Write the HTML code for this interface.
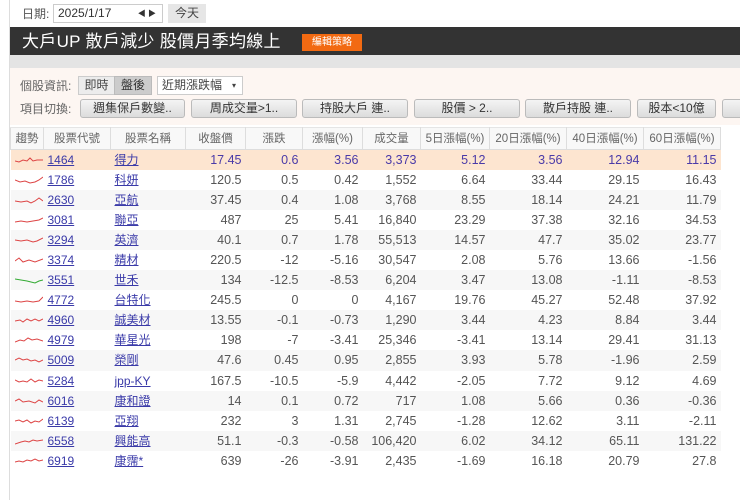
<!DOCTYPE html>
<html><head><meta charset="utf-8"><style>
*{margin:0;padding:0;box-sizing:border-box}
body{width:740px;height:500px;background:#fff;font-family:"Liberation Sans","Noto Sans CJK TC",sans-serif;font-size:12px;color:#555;position:relative;overflow:hidden;line-height:14px}
.a{position:absolute}
.lb{position:absolute;left:9px;top:0;width:1px;height:500px;background:#ddd}
.btn{position:absolute;top:99px;height:19px;background:linear-gradient(#f4f4f4,#dcdcdc);border:1px solid #bbb;border-radius:3px;text-align:center;font-size:12px;line-height:17px;color:#333}
table{position:absolute;left:10px;top:127px;border-collapse:collapse;table-layout:fixed;width:710px}
th{height:22px;font-weight:normal;font-size:11.5px;line-height:14px;color:#666;background:#f8f8f8;border:1px solid #ddd;border-top:1px solid #e5e5e5}
td{height:20.1px;text-align:right;padding-right:4px;font-size:12.5px;line-height:14px;color:#555;white-space:nowrap;vertical-align:middle}
td.l{text-align:left;padding-left:4px}
td a{color:#3a3aa8;text-decoration:underline;font-size:12px;line-height:14px}
tr:nth-child(even) td{background:#f7f7f7}
tr.h td{background:#fde5d0!important;color:#4a3aa8}
svg{display:block}
</style></head><body>
<div class="lb"></div>
<div class="a" style="left:22px;top:7px;color:#555">日期:</div>
<div class="a" style="left:53px;top:4px;width:110px;height:19px;border:1px solid #ccc;background:#fff;font-size:12px;line-height:17px;padding-left:4px;color:#333">2025/1/17<span style="position:absolute;right:6px;font-size:8px">◀ ▶</span></div>
<div class="a" style="left:168px;top:4px;width:38px;height:19px;background:#e6e6e6;text-align:center;line-height:19px;color:#444">今天</div>
<div class="a" style="left:10px;top:27px;width:730px;height:28px;background:#333"></div>
<div class="a" style="left:22px;top:31px;color:#fff;font-size:17px;line-height:22px;letter-spacing:0.3px">大戶UP 散戶減少 股價月季均線上</div>
<div class="a" style="left:302px;top:34px;width:60px;height:17px;background:#f26a12;color:#fff;font-size:10px;text-align:center;line-height:17px">編輯策略</div>
<div class="a" style="left:10px;top:55px;width:730px;height:13px;background:#e4e4e4"></div>
<div class="a" style="left:10px;top:68px;width:730px;height:57px;background:#fdf6f2"></div>
<div class="a" style="left:20px;top:79px;color:#666">個股資訊:</div>
<div class="a" style="left:78px;top:76px;width:37px;height:19px;background:#ececec;border:1px solid #ccc;text-align:center;line-height:17px;color:#444">即時</div>
<div class="a" style="left:114px;top:76px;width:38px;height:19px;background:#ccc;border:1px solid #bbb;text-align:center;line-height:17px;color:#333">盤後</div>
<div class="a" style="left:157px;top:76px;width:86px;height:19px;background:#fff;border:1px solid #ccc;line-height:17px;padding-left:4px;color:#444">近期漲跌幅<span style="position:absolute;right:6px;font-size:8px">▾</span></div>
<div class="a" style="left:20px;top:102px;color:#666">項目切換:</div>
<div class="btn" style="left:80px;width:105px">週集保戶數變..</div>
<div class="btn" style="left:191px;width:106px">周成交量&gt;1..</div>
<div class="btn" style="left:302px;width:106px">持股大戶 連..</div>
<div class="btn" style="left:414px;width:106px">股價 &gt; 2..</div>
<div class="btn" style="left:525px;width:106px">散戶持股 連..</div>
<div class="btn" style="left:637px;width:79px">股本&lt;10億</div>
<div class="btn" style="left:722px;width:30px"></div>
<table>
<colgroup><col style="width:33px"><col style="width:67px"><col style="width:75px"><col style="width:60px"><col style="width:57px"><col style="width:60px"><col style="width:58px"><col style="width:69px"><col style="width:77px"><col style="width:77px"><col style="width:77px"></colgroup>
<tr><th>趨勢</th><th>股票代號</th><th>股票名稱</th><th>收盤價</th><th>漲跌</th><th>漲幅(%)</th><th>成交量</th><th>5日漲幅(%)</th><th>20日漲幅(%)</th><th>40日漲幅(%)</th><th>60日漲幅(%)</th></tr>
<tr class="h"><td class="l"><svg width="28" height="10"><polyline fill="none" stroke="#d44" stroke-width="1" points="0,6 4,7 8,5 12,6 15,3 18,6 22,5 28,5"/></svg></td><td class="l"><a>1464</a></td><td class="l"><a>得力</a></td><td>17.45</td><td>0.6</td><td>3.56</td><td>3,373</td><td>5.12</td><td>3.56</td><td>12.94</td><td>11.15</td></tr>
<tr><td class="l"><svg width="28" height="10"><polyline fill="none" stroke="#d44" points="0,5 5,7 10,6 15,8 20,7 24,5 28,2"/></svg></td><td class="l"><a>1786</a></td><td class="l"><a>科妍</a></td><td>120.5</td><td>0.5</td><td>0.42</td><td>1,552</td><td>6.64</td><td>33.44</td><td>29.15</td><td>16.43</td></tr>
<tr><td class="l"><svg width="28" height="10"><polyline fill="none" stroke="#d44" points="0,6 6,7 12,6 16,8 20,6 24,3 28,6"/></svg></td><td class="l"><a>2630</a></td><td class="l"><a>亞航</a></td><td>37.45</td><td>0.4</td><td>1.08</td><td>3,768</td><td>8.55</td><td>18.14</td><td>24.21</td><td>11.79</td></tr>
<tr><td class="l"><svg width="28" height="10"><polyline fill="none" stroke="#d44" points="0,7 6,6 12,7 18,6 24,5 28,3"/></svg></td><td class="l"><a>3081</a></td><td class="l"><a>聯亞</a></td><td>487</td><td>25</td><td>5.41</td><td>16,840</td><td>23.29</td><td>37.38</td><td>32.16</td><td>34.53</td></tr>
<tr><td class="l"><svg width="28" height="10"><polyline fill="none" stroke="#d44" points="0,5 6,6 12,5 18,7 22,6 28,3"/></svg></td><td class="l"><a>3294</a></td><td class="l"><a>英濟</a></td><td>40.1</td><td>0.7</td><td>1.78</td><td>55,513</td><td>14.57</td><td>47.7</td><td>35.02</td><td>23.77</td></tr>
<tr><td class="l"><svg width="28" height="10"><polyline fill="none" stroke="#d44" points="0,6 4,3 8,7 14,5 20,7 28,4"/></svg></td><td class="l"><a>3374</a></td><td class="l"><a>精材</a></td><td>220.5</td><td>-12</td><td>-5.16</td><td>30,547</td><td>2.08</td><td>5.76</td><td>13.66</td><td>-1.56</td></tr>
<tr><td class="l"><svg width="28" height="10"><polyline fill="none" stroke="#3a3" points="0,4 6,5 12,6 16,7 20,8 24,6 28,5"/></svg></td><td class="l"><a>3551</a></td><td class="l"><a>世禾</a></td><td>134</td><td>-12.5</td><td>-8.53</td><td>6,204</td><td>3.47</td><td>13.08</td><td>-1.11</td><td>-8.53</td></tr>
<tr><td class="l"><svg width="28" height="10"><polyline fill="none" stroke="#d44" points="0,6 6,7 12,6 18,7 24,6 28,2"/></svg></td><td class="l"><a>4772</a></td><td class="l"><a>台特化</a></td><td>245.5</td><td>0</td><td>0</td><td>4,167</td><td>19.76</td><td>45.27</td><td>52.48</td><td>37.92</td></tr>
<tr><td class="l"><svg width="28" height="10"><polyline fill="none" stroke="#d44" points="0,6 5,5 8,7 12,4 16,6 20,4 24,6 28,4"/></svg></td><td class="l"><a>4960</a></td><td class="l"><a>誠美材</a></td><td>13.55</td><td>-0.1</td><td>-0.73</td><td>1,290</td><td>3.44</td><td>4.23</td><td>8.84</td><td>3.44</td></tr>
<tr><td class="l"><svg width="28" height="10"><polyline fill="none" stroke="#d44" points="0,7 5,5 9,6 13,3 17,5 22,4 28,6"/></svg></td><td class="l"><a>4979</a></td><td class="l"><a>華星光</a></td><td>198</td><td>-7</td><td>-3.41</td><td>25,346</td><td>-3.41</td><td>13.14</td><td>29.41</td><td>31.13</td></tr>
<tr><td class="l"><svg width="28" height="10"><polyline fill="none" stroke="#d44" points="0,5 4,3 8,5 12,4 16,6 20,5 24,7 28,5"/></svg></td><td class="l"><a>5009</a></td><td class="l"><a>榮剛</a></td><td>47.6</td><td>0.45</td><td>0.95</td><td>2,855</td><td>3.93</td><td>5.78</td><td>-1.96</td><td>2.59</td></tr>
<tr><td class="l"><svg width="28" height="10"><polyline fill="none" stroke="#d44" points="0,4 4,6 8,5 12,6 16,3 20,6 24,4 28,5"/></svg></td><td class="l"><a>5284</a></td><td class="l"><a>jpp-KY</a></td><td>167.5</td><td>-10.5</td><td>-5.9</td><td>4,442</td><td>-2.05</td><td>7.72</td><td>9.12</td><td>4.69</td></tr>
<tr><td class="l"><svg width="28" height="10"><polyline fill="none" stroke="#d44" points="0,5 4,3 8,6 14,5 20,7 24,4 28,6"/></svg></td><td class="l"><a>6016</a></td><td class="l"><a>康和證</a></td><td>14</td><td>0.1</td><td>0.72</td><td>717</td><td>1.08</td><td>5.66</td><td>0.36</td><td>-0.36</td></tr>
<tr><td class="l"><svg width="28" height="10"><polyline fill="none" stroke="#d44" points="0,5 4,4 8,6 12,4 16,7 20,5 24,6 28,3"/></svg></td><td class="l"><a>6139</a></td><td class="l"><a>亞翔</a></td><td>232</td><td>3</td><td>1.31</td><td>2,745</td><td>-1.28</td><td>12.62</td><td>3.11</td><td>-2.11</td></tr>
<tr><td class="l"><svg width="28" height="10"><polyline fill="none" stroke="#d44" points="0,8 6,6 10,5 14,6 18,4 22,5 28,4"/></svg></td><td class="l"><a>6558</a></td><td class="l"><a>興能高</a></td><td>51.1</td><td>-0.3</td><td>-0.58</td><td>106,420</td><td>6.02</td><td>34.12</td><td>65.11</td><td>131.22</td></tr>
<tr><td class="l"><svg width="28" height="10"><polyline fill="none" stroke="#d44" points="0,6 4,5 8,6 12,4 16,5 20,3 24,5 28,4"/></svg></td><td class="l"><a>6919</a></td><td class="l"><a>康霈*</a></td><td>639</td><td>-26</td><td>-3.91</td><td>2,435</td><td>-1.69</td><td>16.18</td><td>20.79</td><td>27.8</td></tr>
</table>
</body></html>
